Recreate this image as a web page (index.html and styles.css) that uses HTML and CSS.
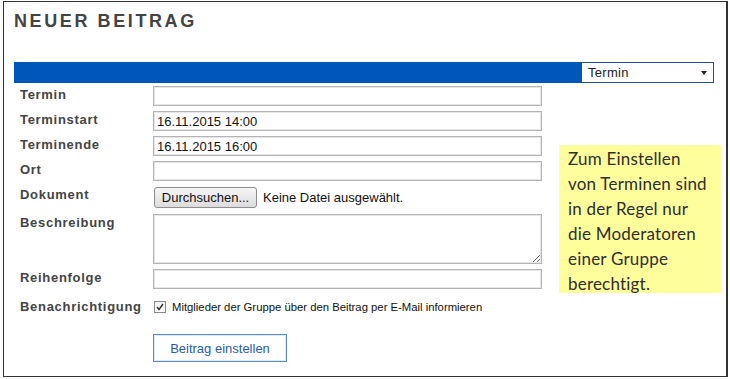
FILE: index.html
```html
<!DOCTYPE html>
<html lang="de">
<head>
  <meta charset="UTF-8">
  <meta name="viewport" content="width=device-width, initial-scale=1.0">
  <title>Neuer Beitrag</title>
  <link rel="stylesheet" href="styles.css">
</head>
<body>
  <div class="frame">
    <h1 class="title">NEUER BEITRAG</h1>
    <div class="typebar">
      <div class="select">Termin<span class="caret"></span></div>
    </div>
    <div class="form">
      <label class="lbl">Termin</label>
      <div class="field"><input class="txt" type="text"></div>

      <label class="lbl">Terminstart</label>
      <div class="field"><input class="txt" type="text" value="16.11.2015 14:00"></div>

      <label class="lbl">Terminende</label>
      <div class="field"><input class="txt" type="text" value="16.11.2015 16:00"></div>

      <label class="lbl">Ort</label>
      <div class="field"><input class="txt" type="text"></div>

      <label class="lbl row-doc">Dokument</label>
      <div class="field row-doc file">
        <span class="filebtn">Durchsuchen...</span>
        <span class="filename">Keine Datei ausgewählt.</span>
      </div>

      <label class="lbl">Beschreibung</label>
      <div class="field"><textarea class="area"></textarea></div>

      <label class="lbl">Reihenfolge</label>
      <div class="field"><input class="txt" type="text"></div>

      <label class="lbl row-notify">Benachrichtigung</label>
      <div class="field row-notify notify">
        <span class="check">
          <svg width="8" height="8" viewBox="0 0 8 8"><polyline points="1,4 3,6.5 7,1" fill="none" stroke="#333" stroke-width="1.4"/></svg>
        </span>
        <span>Mitglieder der Gruppe über den Beitrag per E-Mail informieren</span>
      </div>

      <div class="field submit">
        <button class="send" type="button">Beitrag einstellen</button>
      </div>
    </div>

    <div class="note">
      Zum Einstellen<br>
      von Terminen sind<br>
      in der Regel nur<br>
      die Moderatoren<br>
      einer Gruppe<br>
      berechtigt.
    </div>
  </div>
</body>
</html>
```

FILE: styles.css
```css
* {
  margin: 0;
  padding: 0;
  box-sizing: border-box;
}
body {
  background-color: #fff;
  font-family: "Liberation Sans", Arial, sans-serif;
  color: #222;
}
.frame {
  position: relative;
  width: 725px;
  height: 376px;
  margin: 1px 0 0 3px;
  border: 1px solid #333;
  border-right-width: 2px;
  padding: 8px 12px 0 10px;
}
.title {
  font-size: 18px;
  line-height: 22px;
  font-weight: bold;
  letter-spacing: 2.6px;
  color: #444;
}
.typebar {
  margin-top: 30px;
  height: 21px;
  background-color: #0056bb;
  display: flex;
  justify-content: flex-end;
}
.select {
  width: 133px;
  height: 21px;
  background-color: #fff;
  border: 1px solid #1f4f9e;
  font-size: 13px;
  line-height: 19px;
  letter-spacing: 0.3px;
  padding-left: 6px;
  color: #222;
  position: relative;
}
.caret {
  position: absolute;
  right: 6px;
  top: 8px;
  border-left: 3px solid transparent;
  border-right: 3px solid transparent;
  border-top: 4px solid #222;
}
.form {
  display: grid;
  grid-template-columns: 139px 389px;
  row-gap: 5px;
  margin-top: 3px;
}
.lbl {
  padding-left: 6px;
  font-size: 13px;
  line-height: 18px;
  font-weight: bold;
  letter-spacing: 0.7px;
  color: #444;
}
.field {
  min-height: 20px;
}
.txt {
  display: block;
  width: 389px;
  height: 20px;
  border: 1px solid #b4b4b4;
  box-shadow: inset 0 0 0 1px #e6e6e6;
  font-family: "Liberation Sans", Arial, sans-serif;
  font-size: 13px;
  color: #111;
  padding: 0 3px;
  outline: none;
}
.row-doc {
  min-height: 23px;
}
.file {
  display: flex;
  align-items: center;
  gap: 6px;
  font-size: 13px;
  color: #111;
  padding-left: 1px;
}
.filebtn {
  display: inline-block;
  width: 103px;
  height: 21px;
  line-height: 19px;
  text-align: center;
  border: 1px solid #8e8e8e;
  border-radius: 3px;
  background: linear-gradient(#f6f6f6, #dcdcdc);
}
.area {
  display: block;
  width: 389px;
  height: 50px;
  border: 1px solid #b4b4b4;
  box-shadow: inset 0 0 0 1px #e6e6e6;
  resize: vertical;
  outline: none;
}
.row-notify {
  margin-top: 4px;
}
.notify {
  display: flex;
  align-items: center;
  gap: 6px;
  font-size: 11.3px;
  color: #111;
  padding-left: 1px;
  min-height: 18px;
}
.check {
  width: 12px;
  height: 12px;
  border: 1px solid #8a8a8a;
  background: linear-gradient(#f2f2f2, #fff);
  display: flex;
  align-items: center;
  justify-content: center;
}
.submit {
  grid-column: 2;
  margin-top: 13px;
}
.send {
  width: 134px;
  height: 28px;
  border: 1px solid #5b8ad0;
  box-shadow: inset 0 0 0 1px #dfe9f7;
  background-color: #fff;
  color: #2a5bb0;
  font-family: "Liberation Sans", Arial, sans-serif;
  font-size: 13px;
}
.note {
  position: absolute;
  left: 555px;
  top: 143px;
  width: 162px;
  height: 148px;
  background-color: #fefe9a;
  padding: 1px 0 0 9px;
  font-family: Lato, "Open Sans", sans-serif;
  font-size: 17px;
  line-height: 25px;
  letter-spacing: 0.2px;
  color: #2e2e2e;
}
```
